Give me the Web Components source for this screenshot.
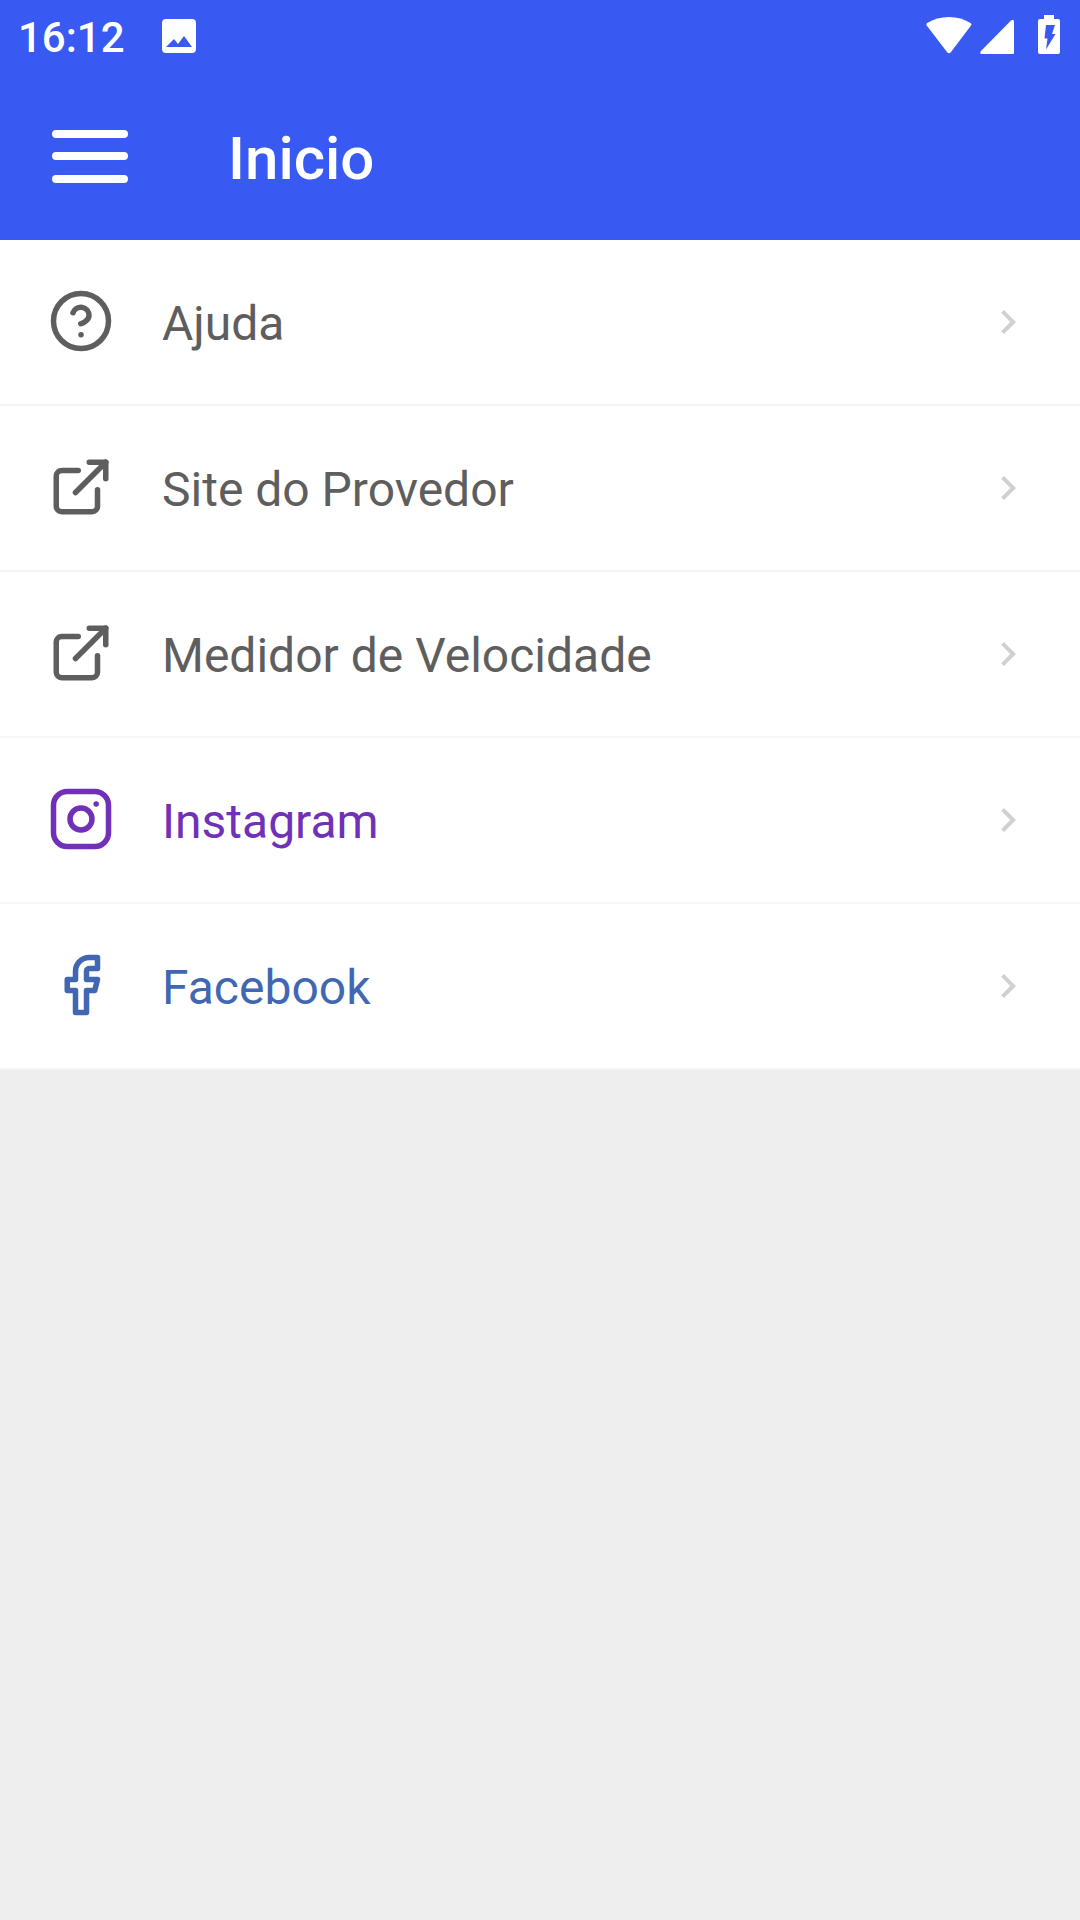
<!DOCTYPE html>
<html lang="pt-BR">
<head>
<meta charset="utf-8">
<meta name="viewport" content="width=device-width, initial-scale=1">
<title>Inicio</title>
<style>
  :root { --brand: #385af2; --text: #5e5e5e; --line: #f5f5f5; }
  body { margin: 0; min-height: 100vh; background: #eeeeee; color: var(--text); font-family: Roboto, "Noto Sans", sans-serif; }
  menu-item.instagram { color: #7030b8; }
  menu-item.facebook { color: #4267b2; }
</style>
</head>
<body>
<status-bar>16:12</status-bar>
<app-header>Inicio</app-header>
<menu-list>
  <menu-item icon="help" href="#ajuda">Ajuda</menu-item>
  <menu-item icon="external" href="#site">Site do Provedor</menu-item>
  <menu-item icon="external" href="#velocidade">Medidor de Velocidade</menu-item>
  <menu-item icon="instagram" class="instagram" href="#instagram">Instagram</menu-item>
  <menu-item icon="facebook" class="facebook" href="#facebook">Facebook</menu-item>
</menu-list>
<script>
const ICONS = {
  help: '<circle cx="12" cy="12" r="10"/><path d="M9.09 9a3 3 0 0 1 5.83 1c0 2-3 3-3 3"/><path d="M12 17h.01"/>',
  external: '<path d="M18 13v6a2 2 0 0 1-2 2H5a2 2 0 0 1-2-2V8a2 2 0 0 1 2-2h6"/><path d="M15 3h6v6"/><path d="M10 14L21 3"/>',
  instagram: '<rect x="2" y="2" width="20" height="20" rx="5"/><circle cx="12" cy="12" r="4"/><path d="M17.5 6.5h.01"/>',
  facebook: '<path d="M18 2h-3a5 5 0 0 0-5 5v3H7v4h3v8h4v-8h3l1-4h-4V7a1 1 0 0 1 1-1h3z"/>'
};

class StatusBar extends HTMLElement {
  constructor() {
    super();
    this.attachShadow({ mode: 'open' }).innerHTML = `
      <style>
        :host { display: flex; justify-content: space-between; height: 72px; padding: 0 20px 0 18px; box-sizing: border-box; background: var(--brand); color: #fff; }
        .group { display: flex; align-items: center; gap: 37px; }
        .signals { align-items: flex-start; gap: 8px; padding-top: 15px; }
        .clock { padding-top: 4px; font-size: 42px; line-height: 48px; font-weight: 500; }
        svg { display: block; fill: currentColor; }
        .battery { margin-left: 16px; }
      </style>
      <div class="group">
        <span class="clock"><slot></slot></span>
        <svg width="34" height="34" viewBox="0 0 34 34" aria-hidden="true"><path fill-rule="evenodd" d="M4 0h26a4 4 0 0 1 4 4v26a4 4 0 0 1-4 4H4a4 4 0 0 1-4-4V4a4 4 0 0 1 4-4zM4 28h26L22 17l-6 8-4-5z"/></svg>
      </div>
      <div class="group signals">
        <svg width="46" height="39" viewBox="0 0 46 39" aria-hidden="true"><path d="M.7 10.500Q-.3 9 1.200 8Q11 2 23 2T44.500 8Q46 9 45 10.500L25 37Q23 39.500 21 37Z"/></svg>
        <svg width="34" height="39" viewBox="0 0 34 39" aria-hidden="true"><path d="M31 5.500Q34 3.500 34 7V38Q34 39 33 39H2Q-1 39 1 36Z"/></svg>
        <svg class="battery" width="22" height="39" viewBox="0 0 22 39" aria-hidden="true"><path fill-rule="evenodd" d="M6 0h10v4h4a2 2 0 0 1 2 2v31a2 2 0 0 1-2 2H2a2 2 0 0 1-2-2V6a2 2 0 0 1 2-2h4zM8 10h9l-3 9h3.500L8 34.500l1.500-11H6.500z"/></svg>
      </div>`;
  }
}

class AppHeader extends HTMLElement {
  constructor() {
    super();
    this.attachShadow({ mode: 'open' }).innerHTML = `
      <style>
        :host { display: flex; align-items: center; gap: 76px; height: 168px; padding: 0 28px; box-sizing: border-box; background: var(--brand); color: #fff; }
        button { display: flex; padding: 24px; border: 0; background: none; color: inherit; cursor: pointer; }
        svg { display: block; }
        h1 { margin: 0; padding-top: 6px; font-size: 60px; line-height: 72px; font-weight: 500; }
      </style>
      <button type="button" aria-label="Menu">
        <svg width="76" height="54" viewBox="0 0 76 54" fill="none" stroke="currentColor" stroke-width="8" stroke-linecap="round"><path d="M4 5h68M4 27h68M4 50h68"/></svg>
      </button>
      <h1><slot></slot></h1>`;
  }
}

class MenuList extends HTMLElement {
  constructor() {
    super();
    this.attachShadow({ mode: 'open' }).innerHTML = `
      <style>
        :host { display: block; background: #fff; }
        nav { display: flex; flex-direction: column; }
      </style>
      <nav><slot></slot></nav>`;
  }
}

class MenuItem extends HTMLElement {
  constructor() {
    super();
    const icon = ICONS[this.getAttribute('icon')];
    this.attachShadow({ mode: 'open' }).innerHTML = `
      <style>
        :host { display: block; }
        a { display: flex; align-items: center; gap: 48px; height: 166px; padding: 0 48px; box-sizing: border-box; border-bottom: 2px solid var(--line); color: inherit; text-decoration: none; }
        svg { display: block; flex: none; }
        .icon { padding-bottom: 2px; fill: none; stroke: currentColor; stroke-width: 2; stroke-linecap: round; stroke-linejoin: round; }
        .label { flex: 1; padding-top: 4px; font-size: 48px; line-height: 56px; }
        .chevron { fill: #d0d0d0; }
      </style>
      <a href="${this.getAttribute('href')}">
        <svg class="icon" width="66" height="66" viewBox="0 0 24 24" aria-hidden="true">${icon}</svg>
        <span class="label"><slot></slot></span>
        <svg class="chevron" width="48" height="48" viewBox="0 0 24 24" aria-hidden="true"><path d="M8.590 16.580L13.170 12L8.590 7.410L10 6l6 6-6 6z"/></svg>
      </a>`;
  }
}

customElements.define('status-bar', StatusBar);
customElements.define('app-header', AppHeader);
customElements.define('menu-list', MenuList);
customElements.define('menu-item', MenuItem);
</script>
</body>
</html>
